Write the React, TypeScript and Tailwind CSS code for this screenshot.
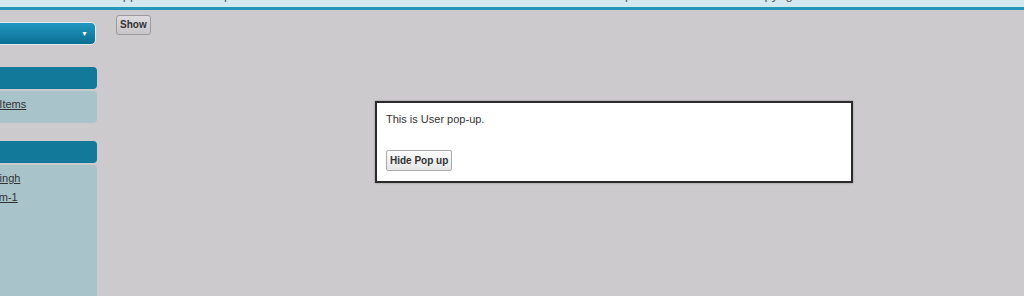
import React from 'react';

const sidebarItems = ['Kamal Singh', 'Test Team-1'];

const App: React.FC = () => {
  return (
    <div className="relative w-[1024px] h-[296px] overflow-hidden bg-[#cdcacd] font-['Liberation_Sans',Arial,sans-serif] text-[#333]">
      {/* Top header, mostly scrolled out of view */}
      <div className="h-[10px] overflow-hidden bg-[#d4e9ef] border-b-[3px] border-[#2398bb]">
        <div className="flex -mt-[12px] pl-[114px] text-[13px] leading-[13px] text-[#555] whitespace-nowrap">
          <span>Application</span>
          <span className="ml-[27px]">Help</span>
          <span className="ml-[377px]">Reports</span>
          <span className="ml-[94px]">Copyright</span>
        </div>
      </div>

      <div className="flex h-[286px]">
        {/* Sidebar, scrolled partly off the left edge */}
        <div className="w-[97px] shrink-0 overflow-hidden">
          <div className="-ml-[123px] w-[220px] flex flex-col h-full">
            <div className="mt-[12px] mr-[1px] h-[23px] rounded-[5px] border border-[#dfeaee] bg-gradient-to-b from-[#2198c0] to-[#0b6e93] flex items-center justify-end pr-[7px]">
              <span className="text-white text-[7px] leading-none">▼</span>
            </div>

            <div className="mt-[22px] h-[22px] rounded-[4px] bg-[#13799b]" />
            <div className="mt-[2px] h-[32px] rounded-[4px] bg-[#a9c3cb] pl-[81px] pt-[6px] text-[11px] leading-[14px]">
              <span className="underline">View All Items</span>
            </div>

            <div className="mt-[18px] h-[22px] rounded-[4px] bg-[#13799b]" />
            <div className="mt-[2px] flex-1 rounded-t-[4px] bg-[#a9c3cb] pl-[81px] pt-[4px] text-[11px] leading-[19px] flex flex-col">
              {sidebarItems.map(item => (
                <span key={item} className="underline">
                  {item}
                </span>
              ))}
            </div>
          </div>
        </div>

        {/* Main content */}
        <div className="flex-1 pl-[19px] pt-[5px]">
          <button className="block h-[20px] px-[3px] rounded-[3px] border border-[#9b999b] bg-gradient-to-b from-[#dedbde] to-[#c9c6c9] text-[10px] font-bold text-[#333] leading-none">
            Show
          </button>
        </div>
      </div>

      {/* User pop-up */}
      <div className="absolute left-[375px] top-[101px] w-[478px] h-[82px] border-2 border-[#2b2b2b] bg-white shadow-[0_0_2px_rgba(0,0,0,0.3)] pl-[9px] pt-[9px]">
        <p className="text-[11px] leading-[14px] text-[#333]">This is User pop-up.</p>
        <button className="block mt-[24px] h-[21px] px-[3px] rounded-[2px] border border-[#aaa] bg-gradient-to-b from-[#fbfbfb] to-[#e6e6e6] text-[10px] font-bold text-[#333] leading-none">
          Hide Pop up
        </button>
      </div>
    </div>
  );
};

export default App;
